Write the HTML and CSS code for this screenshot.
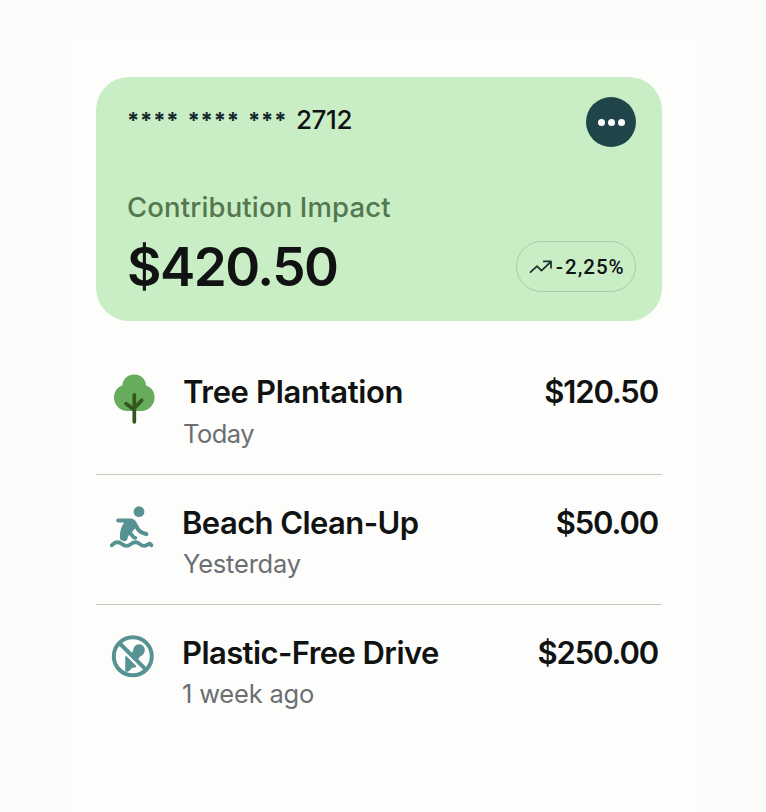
FILE: index.html
```html
<!DOCTYPE html>
<html lang="en">
<head>
<meta charset="utf-8">
<title>Contribution Impact</title>
<link rel="stylesheet" href="styles.css">
</head>
<body>
<main class="panel">
  <section class="card">
    <div class="card-top">
      <div class="number"><span class="mask">****</span><span class="mask">****</span><span class="mask short">***</span><span class="digits">2712</span></div>
      <button class="more" aria-label="More"><i></i><i></i><i></i></button>
    </div>
    <div class="label">Contribution Impact</div>
    <div class="card-bottom">
      <div class="total">$420.50</div>
      <div class="trend">
        <svg width="24" height="16" viewBox="0 0 24 16" fill="none" stroke="#20352f" stroke-width="1.8" stroke-linecap="round" stroke-linejoin="round"><path d="M1.500 13.200 8 7.200 12.500 11.600 21.600 3M14.800 2.400H22V8.800"/></svg>
        <span class="dash">-</span><span class="rate">2,25%</span>
      </div>
    </div>
  </section>
  <ul class="list">
    <li class="row">
      <svg class="icon" width="50" height="60" viewBox="0 0 50 60"><path fill="#67ab5d" d="M24.300 0.600c6.600 0 11.400 4.700 11.800 10.800 5.200 1.700 8.500 6.300 8.500 11.800 0 7.800-6 13.800-13.600 13.800H17.500C9.900 37 4 31.200 4 23.300c0-5.500 3.200-10.100 8.300-11.900C12.800 5.300 17.700 0.600 24.300 0.600z"/><path d="M24.300 20.500V47.500M24.300 35.500 16 29.500M24.300 34 31.700 26" transform="translate(0 .3)" fill="none" stroke="#35571f" stroke-width="3.700" stroke-linecap="round"/></svg>
      <div class="info"><div class="title t1">Tree Plantation</div><div class="when w1">Today</div></div>
      <div class="amount">$120.50</div>
    </li>
    <li class="row">
      <svg class="icon" width="50" height="60" viewBox="0 0 50 60" fill="#569292"><circle cx="29" cy="6.700" r="5.400"/><g fill="none" stroke="#569292" stroke-linecap="round" stroke-linejoin="round"><path d="M8.300 15.500H20.500C23 15.500 24 17 25 19L28.200 24.500C30 27.500 33 28.300 36.300 29" stroke-width="4.200"/><path d="M18.500 27.500C22 27.500 21.500 32.300 25.300 32.800" stroke-width="3.800"/><path d="M1.800 39.800c3.500-4 6.600-4 10.100-1.200 3.300 2.600 5.800 2.600 9 0 3.300-2.600 5.800-2.600 9 0 3 2.400 5.600 2.400 8.300.2 1.400-1 2.600-.6 3.200 1" transform="translate(0 .5)" stroke-width="3.800"/></g><path d="M13 16.500h10l4.200 4.600-6 6.700c-1.400 1.600-2.700 2.200-3.600 5.500-.6 2.400-2 3.300-4.200 2.800-2.600-.5-3.600-1.600-3.500-4.300.2-5.800 1.100-10 4.300-14z"/></svg>
      <div class="info"><div class="title t2">Beach Clean-Up</div><div class="when w2">Yesterday</div></div>
      <div class="amount a2">$50.00</div>
    </li>
    <li class="row">
      <svg class="icon" width="50" height="60" viewBox="0 0 50 60"><path fill="#569292" d="M21.500 19.500c.3-1.700 1.300-2.800 1.700-4.500.7-3.600 2.500-5.700 5.700-5.700 5.300 0 7.500 5.600 4.700 9.500-1.700 2.400-4.400 2.500-5.600 6.200zM16.600 21.300l9.200 9.200c.9 1 .4 2-.8 2.100-1.600 0-2.800.2-3.700 1.200-1 1-2.200 2.400-3.900 2.900-1.500.4-2.300-.3-2.200-1.800l.1-12.900c0-1 .7-1.400 1.300-.7z"/><g fill="none" stroke="#569292" stroke-width="4"><circle cx="22.800" cy="21.300" r="19"/><path d="M9.300 8 36.200 34.800"/></g></svg>
      <div class="info"><div class="title t3">Plastic-Free Drive</div><div class="when w3">1 week ago</div></div>
      <div class="amount">$250.00</div>
    </li>
  </ul>
</main>
</body>
</html>
```
FILE: styles.css
```css
* { box-sizing: border-box; }
body {
  margin: 0;
  padding: 39px 69px 0;
  height: 812px;
  overflow: hidden;
  background: #fcfcfa;
  font-family: Inter, "Liberation Sans", sans-serif;
  color: #111312;
}
.panel {
  height: 773px;
  padding: 38px 35px 0 27px;
  background: #fdfdfc;
}
.card {
  height: 244px;
  width: 566px;
  padding: 20px 26px 0 31px;
  border-radius: 33px;
  background: #c9eec6;
}
.card-top {
  display: flex;
  justify-content: space-between;
  height: 50px;
}
.number {
  display: flex;
  height: 46px;
  line-height: 46px;
  font-size: 26px;
  font-weight: 500;
}
.mask {
  width: 60.500px;
  font-size: 22px;
  font-weight: 700;
  letter-spacing: 0.8px;
  line-height: 46px;
  color: #14282b;
}
.mask.short { width: 48px; }
.digits { letter-spacing: -0.4px; }
.more {
  display: flex;
  align-items: center;
  justify-content: center;
  gap: 3px;
  width: 50px;
  height: 50px;
  padding: 0;
  border: 0;
  border-radius: 50%;
  background: #1f4548;
}
.more i {
  width: 7px;
  height: 7px;
  border-radius: 50%;
  background: #fff;
}
.label {
  margin-top: 42px;
  height: 36px;
  line-height: 36px;
  font-size: 27.500px;
  font-weight: 500;
  letter-spacing: 0.15px;
  color: #54774f;
}
.card-bottom {
  display: flex;
  justify-content: space-between;
  margin-top: 16px;
  height: 50px;
}
.total {
  line-height: 52px;
  font-size: 53px;
  font-weight: 600;
  letter-spacing: -1.5px;
}
.trend {
  display: flex;
  align-items: center;
  width: 120px;
  height: 51px;
  padding-left: 12px;
  border: 1px solid #a9cba8;
  border-radius: 26px;
  font-family: Roboto, "Liberation Sans", sans-serif;
  font-size: 20.500px;
  font-weight: 500;
  letter-spacing: 1px;
  white-space: nowrap;
}
.dash { margin-left: 3px; width: 9px; }
.list {
  width: 566px;
  margin: 24px 0 0;
  padding: 0;
  list-style: none;
}
.row {
  display: flex;
  height: 130px;
  padding: 29px 4px 0 14px;
  border-bottom: 1px solid #c3c9c3;
}
.row:last-child { border-bottom: 0; }
.row + .row { padding-top: 30px; }
.icon { flex: none; }
.info { flex: 1; padding-left: 23px; }
.row + .row .info { padding-left: 22px; }
.title, .amount {
  line-height: 36px;
  font-size: 31px;
  font-weight: 600;
  white-space: nowrap;
}
.amount { letter-spacing: -1.15px; }
.t1 { letter-spacing: -0.35px; }
.t2, .t3 { letter-spacing: -0.58px; }
.when {
  margin-top: 9px;
  line-height: 30px;
  font-size: 25.500px;
  letter-spacing: -0.2px;
  color: #6b6f72;
}
.row + .row .when { margin-top: 8px; }
.w1 { letter-spacing: -0.5px; }
.w2 { padding-left: 1px; }
```
